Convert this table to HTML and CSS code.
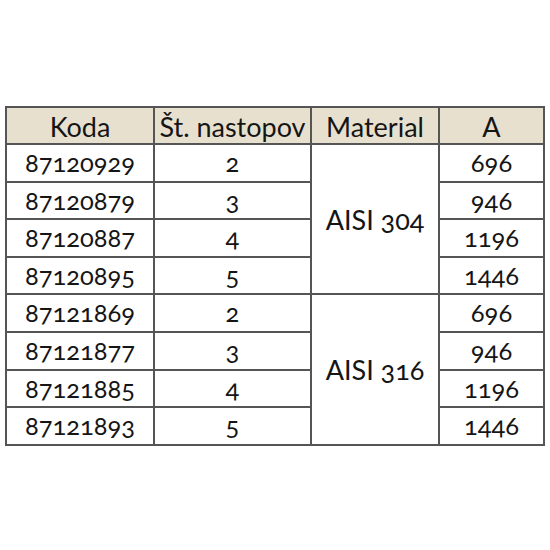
FILE: index.html
```html
<!DOCTYPE html>
<html>
<head>
<meta charset="utf-8">
<link rel="stylesheet" href="styles.css">
</head>
<body>
<table class="spec">
  <colgroup>
    <col class="c1"><col class="c2"><col class="c3"><col class="c4">
  </colgroup>
  <thead>
    <tr><th>Koda</th><th>Št. nastopov</th><th>Material</th><th>A</th></tr>
  </thead>
  <tbody>
    <tr><td>87120929</td><td>2</td><td rowspan="4" class="mat">AISI 304</td><td>696</td></tr>
    <tr><td>87120879</td><td>3</td><td>946</td></tr>
    <tr><td>87120887</td><td>4</td><td>1196</td></tr>
    <tr><td>87120895</td><td>5</td><td>1446</td></tr>
    <tr><td>87121869</td><td>2</td><td rowspan="4" class="mat">AISI 316</td><td>696</td></tr>
    <tr><td>87121877</td><td>3</td><td>946</td></tr>
    <tr><td>87121885</td><td>4</td><td>1196</td></tr>
    <tr><td>87121893</td><td>5</td><td>1446</td></tr>
  </tbody>
</table>
</body>
</html>
```
FILE: styles.css
```css
html, body {
  margin: 0;
  padding: 0;
  background: #ffffff;
}
body {
  padding: 106px 0 0 5px;
}
.spec {
  border-collapse: collapse;
  table-layout: fixed;
  width: 538px;
  font-family: Lato, "Open Sans", sans-serif;
  font-variant-numeric: oldstyle-nums;
  font-size: 25.5px;
  color: #151515;
}
.c1 { width: 148px; }
.c2 { width: 157px; }
.c3 { width: 128px; }
.c4 { width: 105px; }
.spec th, .spec td {
  border: 2px solid #555555;
  padding: 0;
  text-align: center;
  font-weight: normal;
  line-height: 1;
}
.spec th {
  background: #e8e0cf;
  height: 33px;
  font-size: 27px;
  padding-top: 2px;
}
.spec td {
  height: 35.6px;
}
.spec td.mat {
  font-size: 27px;
}
```
